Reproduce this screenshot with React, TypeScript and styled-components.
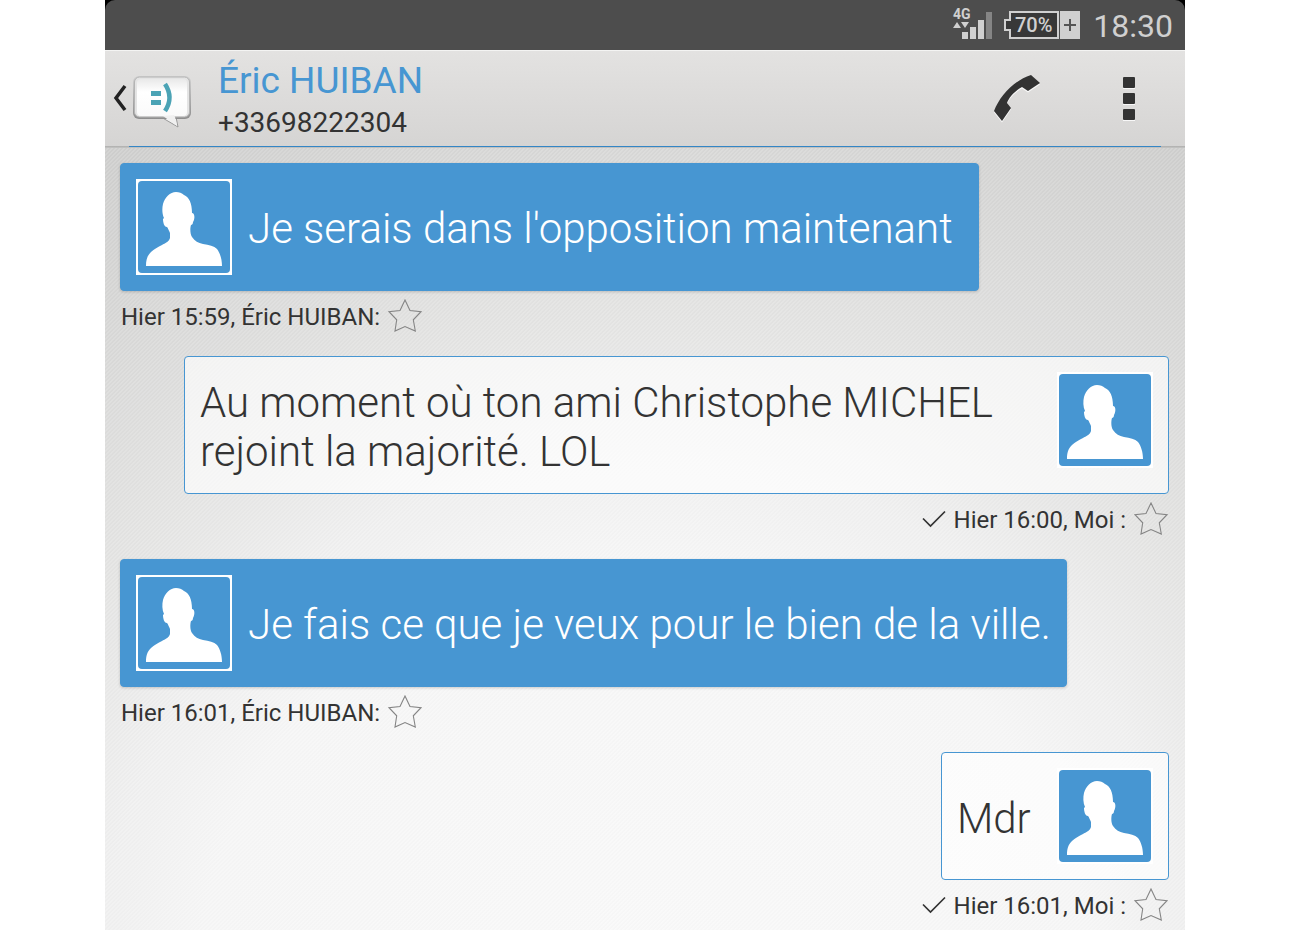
import React from "react";
import styled, { createGlobalStyle } from "styled-components";

const BLUE = "#4796d2";
const INK = "#333333";

const GlobalStyle = createGlobalStyle`
  *, *::before, *::after { box-sizing: border-box; }
  body {
    margin: 0;
    background: #ffffff;
    color: ${INK};
    font-family: Roboto, "Liberation Sans", sans-serif;
  }
`;

const Page = styled.div`
  min-height: 100vh;
  display: flex;
  padding: 0 117px 0 105px;
`;

const Phone = styled.div`
  flex: 1;
  min-width: 0;
  display: flex;
  flex-direction: column;
  background: #000000;
`;

const StatusBar = styled.div`
  height: 50px;
  display: flex;
  align-items: center;
  justify-content: flex-end;
  padding: 0 12px;
  background: #4d4d4d;
  border-radius: 10px 10px 0 0;
  color: #d0d0d0;
`;

const Signal = styled.svg`
  display: block;
  margin-right: 12px;
`;

const Battery = styled.svg`
  display: block;
  margin-right: 13px;
`;

const Clock = styled.time`
  font-size: 32px;
  line-height: 50px;
  padding-top: 2px;
`;

const Header = styled.header`
  height: 98px;
  display: flex;
  align-items: center;
  padding: 0 0 2px 8px;
  background:
    linear-gradient(#3486c6, #3486c6) 24px 95px / calc(100% - 48px) 1px no-repeat,
    linear-gradient(#adadac, #c6c6c5) 0 95px / 100% 2px no-repeat,
    linear-gradient(#e3e2e1, #d5d4d3);
  border-top: 1px solid #f4f4f3;
`;

const IconButton = styled.button<{ $width: number }>`
  width: ${(p) => p.$width}px;
  height: 72px;
  display: flex;
  align-items: center;
  justify-content: center;
  padding: 0;
  border: 0;
  background: none;
  color: ${INK};
  cursor: pointer;
`;

const Contact = styled.div`
  flex: 1;
  min-width: 0;
  padding: 5px 0 0 26px;
`;

const ContactName = styled.h1`
  margin: 0;
  color: ${BLUE};
  font-size: 37px;
  line-height: 44px;
  font-weight: 400;
`;

const ContactNumber = styled.p`
  margin: 0;
  font-size: 28px;
  line-height: 40px;
`;

const Thread = styled.ul`
  flex: 1;
  margin: 0;
  padding: 15px 16px 0 15px;
  list-style: none;
  display: flex;
  flex-direction: column;
  gap: 15px;
  background:
    linear-gradient(
      135deg,
      rgba(0, 0, 0, 0.008) 0 25%,
      rgba(255, 255, 255, 0.1) 25% 50%,
      rgba(0, 0, 0, 0.008) 50% 75%,
      rgba(255, 255, 255, 0.1) 75%
    ) 0 0 / 4px 4px,
    radial-gradient(circle 1010px at 50% 110%, #f9f9f9 0, #f6f6f6 450px, #f0f0f0 550px, #e5e5e4 680px, #d9d9d8 850px, #cfcfce 1010px);
`;

const Message = styled.li<{ $mine: boolean }>`
  display: flex;
  flex-direction: column;
  align-items: ${(p) => (p.$mine ? "flex-end" : "flex-start")};
`;

const Bubble = styled.div<{ $mine: boolean }>`
  max-width: calc(100% - 64px);
  display: flex;
  flex-direction: ${(p) => (p.$mine ? "row-reverse" : "row")};
  align-items: flex-start;
  gap: 16px;
  padding: 15px;
  border: 1px solid ${BLUE};
  border-radius: 4px;
  background: ${(p) => (p.$mine ? "rgba(255, 255, 255, 0.65)" : BLUE)};
  color: ${(p) => (p.$mine ? INK : "#ffffff")};
  box-shadow: ${(p) => (p.$mine ? "none" : "0 1px 3px rgba(0, 0, 0, 0.18)")};
`;

const BubbleText = styled.p<{ $mine: boolean }>`
  flex: 1;
  align-self: center;
  margin: 0;
  padding: ${(p) => (p.$mine ? "6px 0 2px" : "5px 0 3px")};
  font-size: 42px;
  line-height: 49px;
  font-weight: 300;
  white-space: break-spaces;
`;

const AvatarImage = styled.svg`
  display: block;
  flex: none;
`;

const Meta = styled.div<{ $mine: boolean }>`
  height: 50px;
  display: flex;
  align-items: center;
  gap: 8px;
  padding: ${(p) => (p.$mine ? "0 1px 0 0" : "0 0 0 1px")};
  font-size: 24px;
  line-height: 32px;
`;

const MetaText = styled.span`
  padding-top: 2px;
`;

const StarButton = styled.button`
  padding: 0;
  border: 0;
  background: none;
  cursor: pointer;
  display: flex;
`;

function Avatar() {
  return (
    <AvatarImage width="96" height="96" viewBox="0 0 96 96" role="img" aria-label="Contact">
      <path fill="#fff" d="M0 0h96v96H0z" />
      <rect x="2" y="2" width="92" height="92" rx="4" fill={BLUE} />
      <path
        fill="#fff"
        d="M10 87C10 81 11 77 15 73C18 70 22 68 26 66C29 64 33 63 34 59L34 54C33 52 32 49 31 48C28 48 27 43 27 40L28 39C26 35 26 29 27 25C29 18 34 13 40 13C43 13 46 14 48 16C53 18 56 24 56 34C59 34 59 40 57 43C57 45 56 46 55 46C54 49 54 55 56 58C59 62 62 64 67 65C73 66 78 67 81 70C84 74 86 80 86 87Z"
      />
    </AvatarImage>
  );
}

function Star() {
  return (
    <StarButton type="button" aria-label="Ajouter aux favoris">
      <svg width="34" height="34" viewBox="0 0 34 34" fill="none" stroke="#858585" strokeWidth="1.1">
        <path d="M17 1L22 11.500L33 12.700L25.300 20.800L27.300 32L17 27.500L7 32L8.700 20.800L1 12.700L12 11.500Z" />
      </svg>
    </StarButton>
  );
}

function SentCheck() {
  return (
    <svg width="24" height="20" viewBox="0 0 24 20" fill="none" stroke={INK} strokeWidth="1.7" role="img" aria-label="Envoyé">
      <path d="M1 9.500L8.500 17L23 2.500" />
    </svg>
  );
}

const messages = [
  { mine: false, text: "Je serais dans l'opposition maintenant ", meta: "Hier 15:59, Éric HUIBAN:" },
  { mine: true, text: "Au moment où ton ami Christophe MICHEL rejoint la majorité. LOL", meta: "Hier 16:00, Moi :" },
  { mine: false, text: "Je fais ce que je veux pour le bien de la ville.", meta: "Hier 16:01, Éric HUIBAN:" },
  { mine: true, text: "Mdr ", meta: "Hier 16:01, Moi :" },
];

export default function App() {
  return (
    <Page>
      <GlobalStyle />
      <Phone>
        <StatusBar>
          <Signal width="40" height="44" viewBox="0 -5 40 44" fill="#d0d0d0" role="img" aria-label="4G">
            <text x="1" y="11" fontSize="14" fontWeight="700" fontFamily="Roboto, sans-serif">4G</text>
            <path d="M1 20L5 14L9 20ZM9 14H17L13 20ZM10 24h6v7h-6zM18 19h6v12h-6zM26 12h6v19h-6z" />
            <path d="M34 4h6v27h-6z" fill="#858585" />
          </Signal>
          <Battery width="76" height="30" viewBox="0 0 76 30" role="img" aria-label="70%">
            <path d="M6 2H54V28H6V20H1V10H6Z" fill="#383838" stroke="#d0d0d0" strokeWidth="2" />
            <path d="M56 1h20v28h-20z" fill="#d0d0d0" />
            <path d="M60 15h12M66 9v12" stroke="#555" strokeWidth="2" />
            <text x="11" y="22" fontSize="20" fontWeight="500" fill="#d0d0d0" fontFamily="Roboto, sans-serif">70%</text>
          </Battery>
          <Clock>18:30</Clock>
        </StatusBar>
        <Header>
          <IconButton type="button" $width={79} aria-label="Retour">
            <svg width="79" height="62" viewBox="0 0 79 62" fill="none">
              <defs>
                <linearGradient id="rim" x2="0" y2="1">
                  <stop stopColor="#d2d2d2" />
                  <stop offset="1" stopColor="#8e8e8e" />
                </linearGradient>
                <linearGradient id="face" x2="0" y2="1">
                  <stop stopColor="#e9e9e9" />
                  <stop offset=".35" stopColor="#fff" />
                  <stop offset="1" stopColor="#fafafa" />
                </linearGradient>
              </defs>
              <path d="M12 18L3 30L12 42" stroke="#222" strokeWidth="3.500" />
              <path d="M48 49L65 59L63 49Z" fill="#f2f2f2" stroke="#999" />
              <rect x="20" y="8" width="58" height="43" rx="6" fill="url(#rim)" />
              <rect x="21.500" y="9" width="55" height="40" rx="5" fill="#e4e4e4" stroke="#b4b4b4" />
              <rect x="24" y="11" width="50" height="37" rx="4" fill="url(#face)" />
              <path d="M50 48L64 58L62 49L61 47Z" fill="#f0f0f0" />
              <path d="M38 23h10v5h-10zM38 32h10v5h-10z" fill="#4ba3b5" />
              <path d="M52 16Q61 29.500 52 43" stroke="#4ba3b5" strokeWidth="4.500" />
            </svg>
          </IconButton>
          <Contact>
            <ContactName>Éric HUIBAN</ContactName>
            <ContactNumber>+33698222304</ContactNumber>
          </Contact>
          <IconButton type="button" $width={112} aria-label="Appeler">
            <svg width="50" height="50" viewBox="0 0 50 50">
              <path
                transform="translate(0 1.500)"
                fill="#f8f8f8"
                d="M2 37C8 22 21 7 39 1L48 9L36 17L30 13C24 16 17 23 15 29L19 34L10 47Z"
              />
              <path fill={INK} d="M2 37C8 22 21 7 39 1L48 9L36 17L30 13C24 16 17 23 15 29L19 34L10 47Z" />
            </svg>
          </IconButton>
          <IconButton type="button" $width={112} aria-label="Plus d'options">
            <svg width="14" height="46" viewBox="0 0 14 46">
              <path fill="#f8f8f8" d="M1 3h12v10H1zM1 19h12v10H1zM1 35h12v10H1z" />
              <rect x="1" y="1" width="12" height="11" rx="1" fill={INK} />
              <rect x="1" y="17" width="12" height="11" rx="1" fill={INK} />
              <rect x="1" y="33" width="12" height="11" rx="1" fill={INK} />
            </svg>
          </IconButton>
        </Header>
        <Thread>
          {messages.map((m) => (
            <Message key={m.text} $mine={m.mine}>
              <Bubble $mine={m.mine}>
                <Avatar />
                <BubbleText $mine={m.mine}>{m.text}</BubbleText>
              </Bubble>
              <Meta $mine={m.mine}>
                {m.mine && <SentCheck />}
                <MetaText>{m.meta}</MetaText>
                <Star />
              </Meta>
            </Message>
          ))}
        </Thread>
      </Phone>
    </Page>
  );
}
